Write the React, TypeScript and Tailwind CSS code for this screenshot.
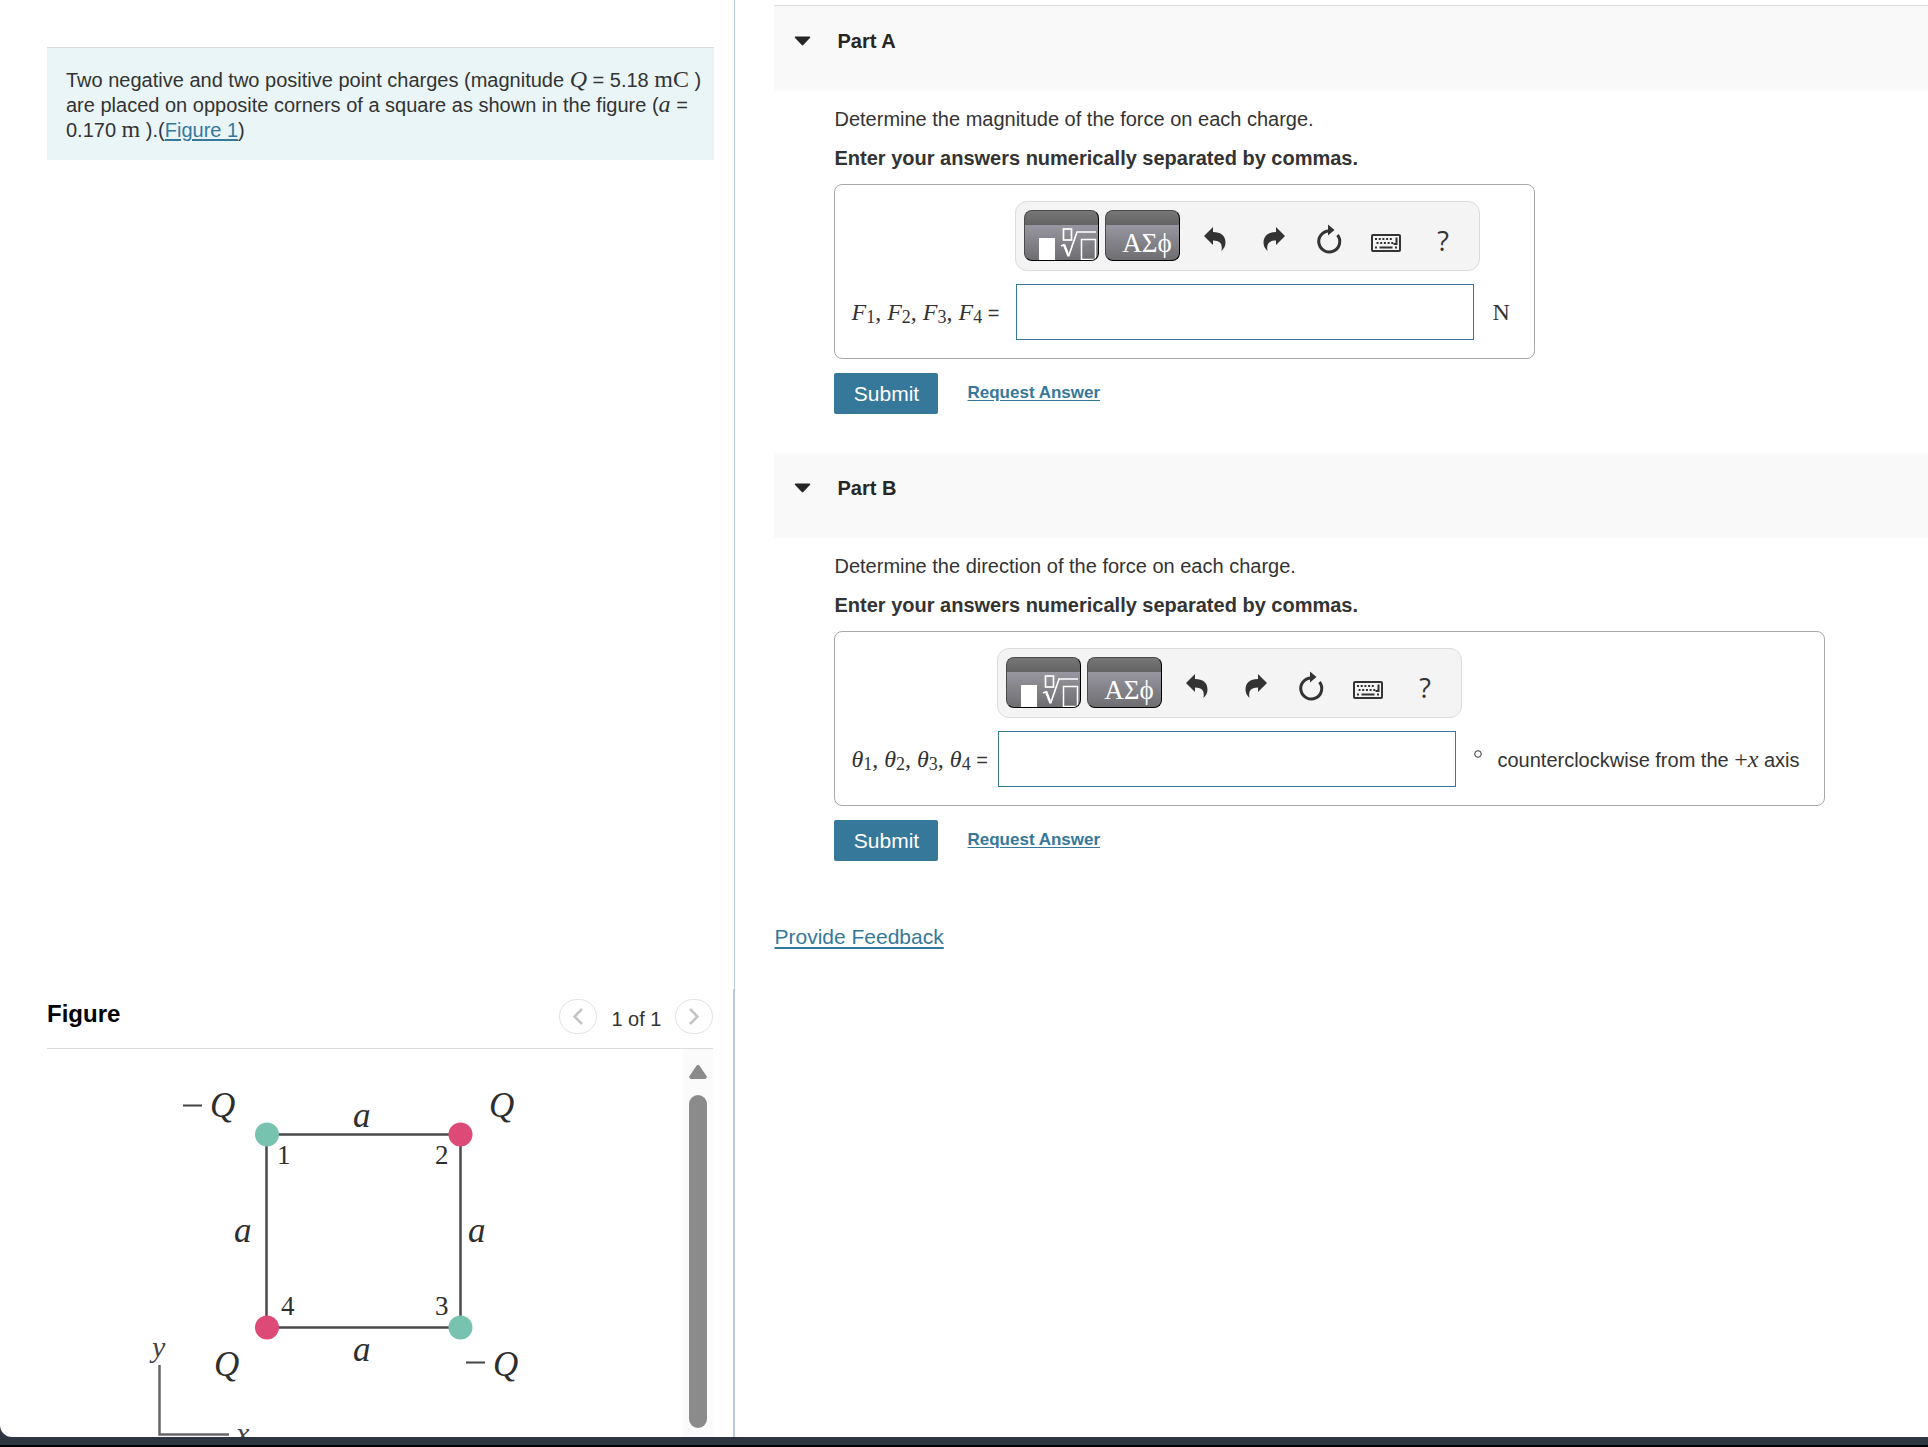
import React from 'react';

interface PartProps {
  id: string;
  title: string;
  description: string;
  symbol: string;
  labelClass: string;
  headerClass: string;
  unit: React.ReactNode;
}

const MathText: React.FC<{ italic?: boolean; children: React.ReactNode }> = ({ italic, children }) => (
  <span
    className={`font-['Liberation_Serif',serif] text-[24px] leading-[0px] ${italic ? 'italic' : ''}`}
  >
    {children}
  </span>
);

const UndoIcon = () => (
  <svg width="32" height="32" viewBox="0 0 32 32" fill="#333" aria-hidden="true">
    <path d="M5 12 14 3v5c8 0 12.500 4 12.500 10.500 0 3.500-1.500 6-4 8.500 1.200-7-1-10.500-8.500-10.500V21z" />
  </svg>
);

const RedoIcon = () => (
  <svg width="32" height="32" viewBox="0 0 32 32" fill="#333" aria-hidden="true">
    <path d="M29 12 20 3v5C12 8 7.500 12 7.500 18.500c0 3.500 1.500 6 4 8.500-1.200-7 1-10.500 8.500-10.500V21z" />
  </svg>
);

const ResetIcon = () => (
  <svg width="32" height="32" viewBox="0 0 32 32" aria-hidden="true">
    <path d="M24.500 11A10.500 10.500 0 1 1 16 7" fill="none" stroke="#333" strokeWidth="3" />
    <path d="M15 0.500 21.500 6 15 11.500z" fill="#333" />
  </svg>
);

const KeyboardIcon = () => (
  <svg width="32" height="32" viewBox="0 0 32 32" aria-hidden="true">
    <rect x="2" y="11" width="28" height="16" rx="1" fill="none" stroke="#333" strokeWidth="2" />
    <path d="M5 15h18M6.500 19h17" stroke="#333" strokeWidth="2" strokeDasharray="2 1.700" />
    <path d="M26.500 13.500v6.500h-3" fill="none" stroke="#333" strokeWidth="2" />
    <path d="M5 23.500h2M9.500 23.500h13M25 23.500h2" stroke="#333" strokeWidth="2" />
  </svg>
);

const RootIcon = () => (
  <svg className="absolute inset-0" width="73" height="49" viewBox="1 1 73 49" aria-hidden="true">
    <rect x="15" y="28" width="16" height="22" fill="#fff" />
    <g fill="none" stroke="#fff">
      <rect x="39.500" y="19" width="8" height="11" strokeWidth="1.700" />
      <path d="M37 36l3.500-1.500" strokeWidth="1.500" />
      <path d="M40 34.500 44.500 46" strokeWidth="2.500" />
      <path d="M44.500 46.500 53 22h19" strokeWidth="1.700" />
      <rect x="57.500" y="29.500" width="14" height="20" strokeWidth="1.500" />
    </g>
  </svg>
);

const darkButton =
  'relative h-[51px] w-[75px] overflow-hidden rounded-lg border border-[#4a4a4a] border-r-black border-b-black bg-[linear-gradient(#777_0px,#636363_14px,#9896a0_14px,#6e6e71_49px)]';
const iconButton = 'flex h-full w-[57px] items-center justify-center pt-2';

const Toolbar = () => (
  <div
    role="toolbar"
    className="flex h-[70px] w-[465px] rounded-xl border border-[#dcdcdc] bg-[#f4f4f4] pl-2"
  >
    <div className="flex gap-[6px] pt-2">
      <button type="button" aria-label="Templates" className={darkButton}>
        <RootIcon />
      </button>
      <button
        type="button"
        aria-label="Symbols"
        className={`${darkButton} pt-4 pl-2 font-['Liberation_Serif',serif] text-[27px] leading-none text-white`}
      >
        ΑΣϕ
      </button>
    </div>
    <div className="ml-[6px] flex">
      <button type="button" aria-label="Undo" className={iconButton}><UndoIcon /></button>
      <button type="button" aria-label="Redo" className={iconButton}><RedoIcon /></button>
      <button type="button" aria-label="Reset" className={iconButton}><ResetIcon /></button>
      <button type="button" aria-label="Keyboard shortcuts" className={iconButton}><KeyboardIcon /></button>
      <button
        type="button"
        aria-label="Help"
        className={`${iconButton} font-['Open_Sans',sans-serif] text-[27px] leading-none text-[#333]`}
      >
        ?
      </button>
    </div>
  </div>
);

const Part: React.FC<PartProps> = ({ id, title, description, symbol, labelClass, headerClass, unit }) => (
  <section>
    <header className={`flex items-start bg-[#f9f9f9] pl-5 ${headerClass}`}>
      <button type="button" className="flex items-center gap-[26px] pt-[23px] text-[#262626]">
        <svg width="17" height="10" viewBox="0 0 17 10" fill="#262626" aria-hidden="true">
          <path d="M1.500 0.500h14a.8.8 0 0 1 .6 1.300L9.300 9a1 1 0 0 1-1.500 0L.9 1.800A.8.8 0 0 1 1.500.5z" />
        </svg>
        <span className="leading-6 font-bold">{title}</span>
      </button>
    </header>

    <div className="pl-[60px]">
      <p className="pt-4 leading-6">{description}</p>
      <p className="pt-[15px] leading-6 font-bold">Enter your answers numerically separated by commas.</p>

      {/* Answer box */}
      <div className="mt-[14px] grid w-fit grid-cols-[auto_auto_auto] gap-y-[13px] rounded-lg border border-[#a9a9a9] pt-4 pr-6 pb-[18px]">
        <div className="col-start-2 row-start-1">
          <Toolbar />
        </div>
        <label
          htmlFor={id}
          className={`col-start-1 row-start-2 self-center pt-[2px] pl-4 whitespace-nowrap ${labelClass}`}
        >
          {[1, 2, 3, 4].map((n) => (
            <React.Fragment key={n}>
              <MathText italic>{symbol}</MathText>
              <sub className="-bottom-[3px] font-['Liberation_Serif',serif] text-[18px] leading-none">{n}</sub>
              {n < 4 && <MathText>, </MathText>}
            </React.Fragment>
          ))}
          {' ='}
        </label>
        <input
          id={id}
          type="text"
          className="col-start-2 row-start-2 ml-px h-14 w-[458px] border border-[#36789a] bg-white px-3 outline-none"
        />
        <div className="col-start-3 row-start-2 self-center pt-[2px] pl-3">{unit}</div>
      </div>

      <div className="mt-[14px] flex items-center">
        <button type="button" className="h-[41px] w-[104px] rounded-xs bg-[#36789a] text-[21px] text-white">
          Submit
        </button>
        <a href="#" className="ml-[29px] pb-[2px] text-[17px] font-bold text-[#36789a] underline underline-offset-2">
          Request Answer
        </a>
      </div>
    </div>
  </section>
);

const FigureDrawing = () => (
  <svg width="520" height="420" viewBox="47 1049 520 420" className="block" role="img" aria-label="Square of charges">
    <g stroke="#4a4a4a" strokeWidth="2.500" fill="none">
      <rect x="266.500" y="1134.500" width="194" height="193" />
      <path d="M159.500 1365v69.500H229" stroke="#666" />
    </g>
    <circle cx="267" cy="1134.500" r="12" fill="#78c2b0" />
    <circle cx="460.500" cy="1134.500" r="12" fill="#dd4a78" />
    <circle cx="460.500" cy="1327.500" r="12" fill="#78c2b0" />
    <circle cx="267" cy="1327.500" r="12" fill="#dd4a78" />
    <g stroke="#444" strokeWidth="2">
      <path d="M183 1105.500h19M466 1362.500h19" />
    </g>
    <g fill="#2e2e2e" className="font-['Liberation_Serif',serif] text-[35px] italic">
      <text x="210" y="1117">Q</text>
      <text x="489" y="1117">Q</text>
      <text x="214" y="1376">Q</text>
      <text x="493" y="1376">Q</text>
      <text x="353" y="1127">a</text>
      <text x="234" y="1242">a</text>
      <text x="468" y="1242">a</text>
      <text x="353" y="1361">a</text>
    </g>
    <g fill="#444" className="font-['Liberation_Serif',serif] text-[30px] italic">
      <text x="152" y="1357">y</text>
      <text x="236" y="1443">x</text>
    </g>
    <g fill="#2e2e2e" className="font-['Liberation_Serif',serif] text-[27px]">
      <text x="277" y="1164">1</text>
      <text x="435" y="1164">2</text>
      <text x="435" y="1315">3</text>
      <text x="281" y="1315">4</text>
    </g>
  </svg>
);

const pagerButton = 'flex h-[35px] w-[38px] items-center justify-center rounded-full border border-[#e2e2e2]';

const FigurePanel = () => (
  <section className="flex h-[448px] flex-col border-r border-[#b9c9de] pr-5 pl-[47px]">
    <div className="flex h-[60px] shrink-0 justify-between border-b border-[#dcdcdc]">
      <h2 className="pt-[9px] text-[24px] leading-8 font-bold text-black">Figure</h2>
      <div className="flex items-start gap-[14px] pt-[10px]">
        <button type="button" aria-label="Previous figure" className={pagerButton}>
          <svg width="10" height="17" viewBox="0 0 10 17" fill="none" stroke="#c4c4c4" strokeWidth="2.500">
            <path d="M9 1 1.500 8.500 9 16" />
          </svg>
        </button>
        <span className="pt-2 leading-6">1 of 1</span>
        <button type="button" aria-label="Next figure" className={pagerButton}>
          <svg width="10" height="17" viewBox="0 0 10 17" fill="none" stroke="#c4c4c4" strokeWidth="2.500">
            <path d="M1 1 8.500 8.500 1 16" />
          </svg>
        </button>
      </div>
    </div>
    <div className="flex min-h-0 flex-1 justify-between">
      <div className="flex-1 overflow-hidden">
        <FigureDrawing />
      </div>
      {/* Scroll bar */}
      <div className="flex w-[30px] flex-col items-center bg-[#fbfbfb] pt-4 pb-[9px]">
        <svg width="18" height="14" viewBox="0 0 18 14" fill="#8b8b8b" aria-hidden="true">
          <path d="M7.300 1a2 2 0 0 1 3.400 0l6.800 10a2 2 0 0 1-1.700 3H2.200a2 2 0 0 1-1.700-3z" />
        </svg>
        <div className="mt-4 w-[18px] flex-1 rounded-full bg-[#8b8b8b]" />
      </div>
    </div>
  </section>
);

const App: React.FC = () => (
  <div className="flex h-screen flex-col bg-[#2d3540] font-['Liberation_Sans',Arial,sans-serif] text-[20px] text-[#333]">
    <main className="grid min-h-0 flex-1 grid-cols-[8fr_13fr] overflow-hidden rounded-bl-xl bg-white">
      <div className="flex min-w-0 flex-col justify-between">
        <div className="pt-[47px] pr-5 pl-[47px]">
          <p className="border-t border-[#dcdcdc] bg-[#eaf5f7] pt-5 pr-2 pb-[17px] pl-[19px] leading-[25px]">
            Two negative and two positive point charges (magnitude <MathText italic>Q</MathText> = 5.18{' '}
            <MathText>mC</MathText> )<br />
            are placed on opposite corners of a square as shown in the figure (<MathText italic>a</MathText> =<br />
            0.170 <MathText>m</MathText> ).(
            <a href="#figure" className="text-[#36789a] underline underline-offset-2">Figure 1</a>)
          </p>
        </div>
        <FigurePanel />
      </div>

      <div className="min-w-0 overflow-hidden border-l border-[#b9c9de] pt-[5px] pl-[39px]">
        <div className="flex flex-col gap-[39px]">
          <Part
            id="answer-a"
            title="Part A"
            description="Determine the magnitude of the force on each charge."
            symbol="F"
            labelClass="w-[180px]"
            headerClass="h-[86px] border-t border-[#dcdcdc]"
            unit={<MathText>N</MathText>}
          />
          <Part
            id="answer-b"
            title="Part B"
            description="Determine the direction of the force on each charge."
            symbol="θ"
            labelClass="w-[162px]"
            headerClass="h-[85px]"
            unit={
              <span className="flex items-center gap-[15px] whitespace-nowrap">
                <svg width="8" height="20" viewBox="0 0 8 20" fill="none" stroke="#333" aria-label="degrees">
                  <circle cx="4" cy="4" r="3.300" />
                </svg>
                <span>
                  counterclockwise from the <MathText>+</MathText>
                  <MathText italic>x</MathText> axis
                </span>
              </span>
            }
          />
        </div>
        <a href="#" className="mt-[60px] inline-block text-[21px] text-[#36789a] underline underline-offset-3">
          Provide Feedback
        </a>
      </div>
    </main>
    <footer className="h-[10px] border-b-2 border-black" />
  </div>
);

export default App;
